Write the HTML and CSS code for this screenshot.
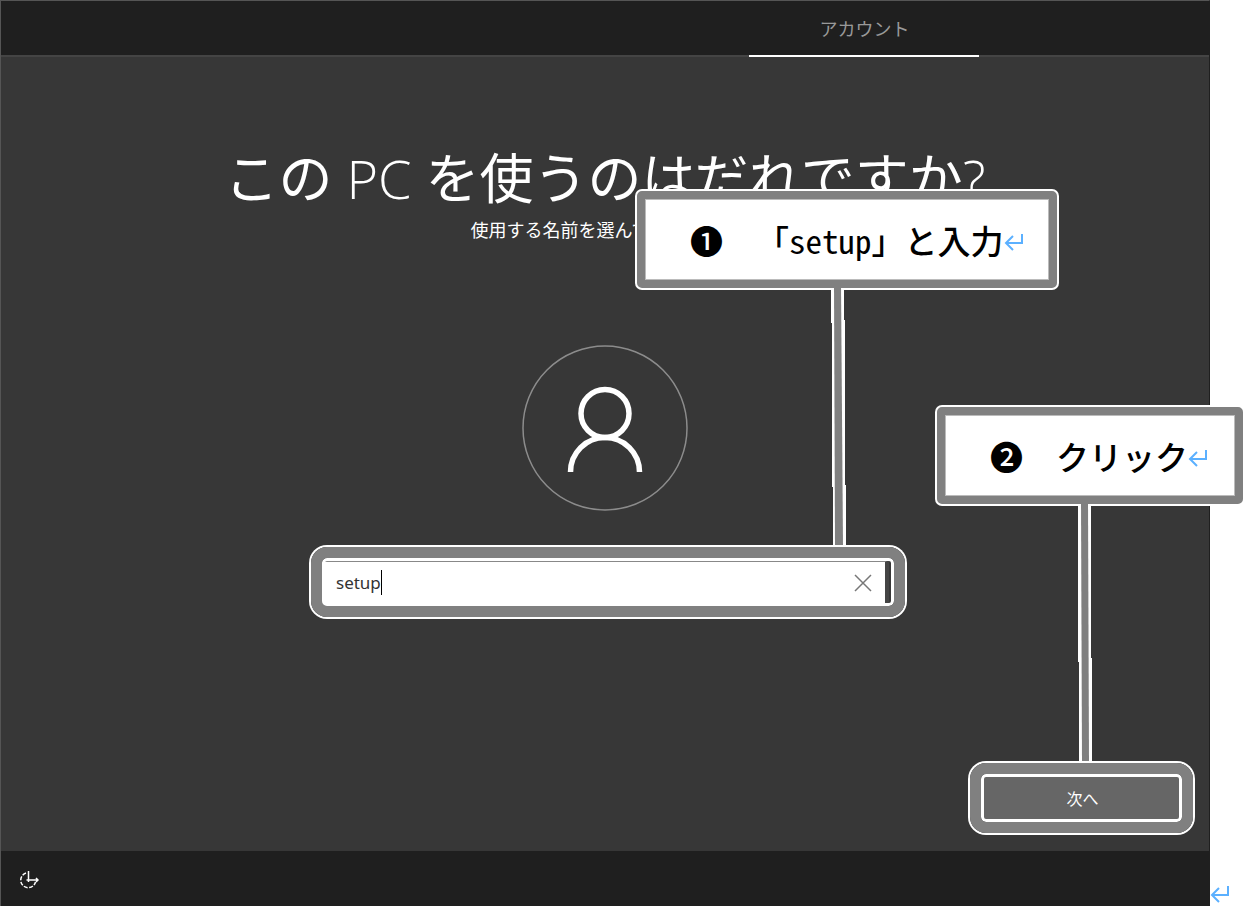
FILE: index.html
```html
<!DOCTYPE html>
<html lang="ja">
<head>
<meta charset="utf-8">
<meta name="viewport" content="width=device-width, initial-scale=1">
<title>このPCを使うのはだれですか?</title>
<link rel="stylesheet" href="styles.css">
</head>
<body>
<div class="page">
  <div class="screen">
    <header class="tabs">
      <a class="tab" href="#account" aria-current="page">アカウント</a>
    </header>
    <main class="content" id="account">
      <h1 class="title">この<span class="latin"> PC </span>を使うのはだれですか<span class="latin">?</span></h1>
      <p class="subtitle">使用する名前を選んでください。</p>
      <svg class="avatar" viewBox="0 0 166 166" fill="none" aria-hidden="true">
        <circle cx="83" cy="83" r="82" stroke="#8c8c8c" stroke-width="1.5"/>
        <circle cx="83" cy="68.500" r="24" stroke="#fff" stroke-width="5.5"/>
        <path d="M48.500 127a34.500 34.500 0 0 1 69 0" stroke="#fff" stroke-width="5.500"/>
      </svg>
      <form class="form">
        <div class="field">
          <input class="name" type="text" value="setup" aria-label="名前" autocomplete="off" spellcheck="false">
          <span class="caret"></span>
          <button class="clear" type="button" aria-label="クリア">
            <svg viewBox="0 0 18 18" width="18" height="18" fill="none" stroke="#777" stroke-width="1.5"><path d="M1 1l16 16M17 1L1 17"/></svg>
          </button>
          <span class="ring ring-field"></span>
        </div>
        <div class="actions">
          <div class="next-wrap">
            <button class="next" type="button">次へ</button>
            <span class="ring ring-next"></span>
          </div>
        </div>
      </form>
    </main>
    <footer class="footer">
      <button class="ease" type="button" aria-label="簡単操作">
        <svg viewBox="0 0 20 20" width="20" height="20" fill="none" stroke="#fff" stroke-width="1.5">
          <path d="M7 3A7.500 7.500 0 1 0 16.500 12" stroke-dasharray="4 1.500"/>
          <path d="M9.500 1v9H19M7.500 9.900h4M9.500 8v4M17 8l2 2-2 2" stroke-width="1.500"/>
        </svg>
      </button>
    </footer>
  </div>
  <div class="gutter">
    <svg class="mark" viewBox="0 0 20 18" fill="none" stroke="#5bb0ff" stroke-width="2"><path d="M18 1v9H2M9 3l-7 7 7 7"/></svg>
  </div>

  <svg class="connector connector-one" viewBox="0 0 18 262" aria-hidden="true">
    <path d="M1 4V39H2V203H3V262H16V201H15V36H14V4Z" fill="#fff"/>
    <path d="M4 0L5 262H13L11 0Z" fill="#808080"/>
  </svg>
  <svg class="connector connector-two" viewBox="0 0 18 262" aria-hidden="true">
    <path d="M1 4V162H2V262H15V158H14V4Z" fill="#fff"/>
    <path d="M4 0L5 262H12L11 0Z" fill="#808080"/>
  </svg>
  <p class="callout callout-one"><span>❶　「<span class="mono">setup</span>」と入力</span>
    <svg class="mark" viewBox="0 0 20 18" fill="none" stroke="#5bb0ff" stroke-width="2"><path d="M18 1v9H2M9 3l-7 7 7 7"/></svg>
  </p>
  <p class="callout callout-two"><span>❷　クリック</span>
    <svg class="mark" viewBox="0 0 20 18" fill="none" stroke="#5bb0ff" stroke-width="2"><path d="M18 1v9H2M9 3l-7 7 7 7"/></svg>
  </p>
</div>
</body>
</html>
```
FILE: styles.css
```css
* { box-sizing: border-box; }

body {
  margin: 0;
  background: #fff;
  color: #fff;
  font-family: "Noto Sans", "Noto Sans CJK JP", sans-serif;
}

button, input { font: inherit; color: inherit; }

.page {
  position: relative;
  display: flex;
  min-height: 100vh;
  padding-bottom: 2px;
}

.screen {
  flex: 1;
  display: flex;
  flex-direction: column;
  background: #373737;
  border-top: 1px solid #555;
  border-left: 1px solid #555;
  border-right: 1px solid #1f1f1f;
}

.gutter {
  width: 42px;
  display: flex;
  align-items: flex-end;
  padding-bottom: 3px;
}

.mark { display: block; width: 20px; height: 18px; flex: none; }

.tabs {
  display: flex;
  justify-content: flex-end;
  height: 56px;
  padding-right: 19%;
  background: #1f1f1f;
  box-shadow: inset 0 -2px #444;
}

.tab {
  width: 230px;
  border-bottom: 2px solid #fff;
  color: #999;
  font-size: 18px;
  line-height: 56px;
  text-align: center;
  text-decoration: none;
}

.content {
  flex: 1;
  display: flex;
  flex-direction: column;
  align-items: center;
  padding: 83px 28px 31px;
}

.title {
  margin: 0;
  font-family: "Noto Sans CJK JP", sans-serif;
  font-size: 54px;
  font-weight: 400;
  line-height: 72px;
}

.title .latin { font-family: "Open Sans", "Noto Sans", sans-serif; font-weight: 300; }

.subtitle { margin: 0; font-size: 18px; line-height: 32px; }

.avatar { width: 166px; height: 166px; margin-top: 99px; }

.form {
  flex: 1;
  display: flex;
  flex-direction: column;
  align-items: center;
  width: 100%;
  margin-top: 49px;
}

.field {
  position: relative;
  display: flex;
  align-items: center;
  width: 568px;
  height: 46px;
  padding-bottom: 3px;
  background: #fff;
  border-top: 2px solid #888;
  border-right: 4px solid #444;
  color: #333;
}

.name {
  flex: 1;
  min-width: 0;
  height: 100%;
  padding: 0 15px;
  border: 0;
  outline: 0;
  background: none;
  font-size: 17px;
}

.caret {
  position: absolute;
  left: 60px;
  top: 8px;
  width: 1px;
  height: 25px;
  background: #000;
}

.clear {
  display: flex;
  padding: 0;
  margin-right: 13px;
  border: 0;
  background: none;
}

.actions { display: flex; justify-content: flex-end; width: 100%; margin-top: auto; }

.next-wrap { position: relative; }

.next {
  display: block;
  width: 197px;
  height: 44px;
  padding: 0;
  border: 0;
  background: #666;
  font-size: 16px;
}

.ring {
  position: absolute;
  border: 11px solid #808080;
  border-radius: 16px;
  box-shadow: 0 0 0 2px #fff, inset 0 0 0 3px #fff;
  pointer-events: none;
  z-index: 3;
}

.ring-field { inset: -15px -20px -11px -10px; }

.ring-next { inset: -13px -12px -13px -14px; }

.footer {
  display: flex;
  align-items: center;
  height: 55px;
  padding: 0 18px;
  background: #1f1f1f;
}

.ease { display: flex; margin-top: 2px; padding: 0; border: 0; background: none; }

.callout {
  position: absolute;
  display: flex;
  align-items: center;
  height: 97px;
  margin: 0;
  padding-left: 45px;
  background: #fff;
  border: 8px solid #808080;
  border-radius: 5px;
  box-shadow: 0 0 0 2px #fff, inset 0 0 0 1px #bbb;
  color: #000;
  font-family: "Noto Sans CJK JP", sans-serif;
  font-size: 33px;
  font-weight: 500;
  text-spacing-trim: space-all;
  white-space: nowrap;
}

.callout .mark { margin-top: 5px; }

.mono { font-family: "Noto Sans Mono CJK JP", "Liberation Mono", monospace; }

.callout-one { left: 637px; top: 191px; width: 420px; }

.callout-two { left: 937px; top: 407px; width: 306px; }

.connector { position: absolute; width: 18px; height: 262px; z-index: 2; }

.connector-one { left: 830px; top: 284px; }

.connector-two { left: 1077px; top: 500px; }
```
